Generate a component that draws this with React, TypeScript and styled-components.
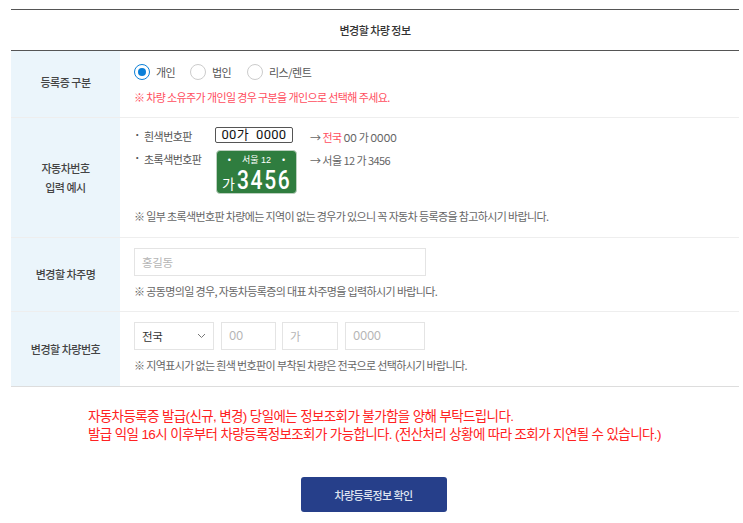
import React from "react";
import styled, { createGlobalStyle } from "styled-components";

const Global = createGlobalStyle`
  html, body { margin: 0; padding: 0; background: #fff; height: 523px; overflow: hidden; }
  body { font-family: "Noto Sans CJK KR", "Noto Sans", sans-serif; color: #555; }
  * { box-sizing: border-box; }
`;
const Page = styled.div`padding: 9px 4px 0 11px; width: 743px;`;
const Table = styled.div`border-top: 1px solid #555; border-bottom: 1px solid #ddd;`;
const Title = styled.div`height: 41px; border-bottom: 1px solid #555; display: flex; align-items: center; justify-content: center; font-size: 11px; font-weight: 500; color: #333; letter-spacing: -0.52px; padding-bottom: 1px;`;
const Row = styled.div<{ $h: number; $last?: boolean }>`display: flex; height: ${p => p.$h}px; border-bottom: ${p => (p.$last ? "0" : "1px solid #eee")};`;
const Label = styled.div<{ $up?: number }>`width: 109px; flex: none; background: #ebf5fb; display: flex; align-items: center; justify-content: center; text-align: center; font-size: 11px; line-height: 19px; font-weight: 500; color: #444; letter-spacing: -0.5px; padding-bottom: ${p => p.$up ?? 0}px;`;
const Cell = styled.div`flex: 1; padding-left: 14px; position: relative; display: flex; flex-direction: column;`;
const Radios = styled.div`display: flex; align-items: center; height: 18px; margin-top: 12px; font-size: 11px; letter-spacing: -0.5px; color: #555;`;
const Radio = styled.span<{ $on?: boolean }>`width: 16px; height: 16px; border-radius: 50%; margin-right: 6px; flex: none; border: 1px solid ${p => (p.$on ? "#0b7fd8" : "#ccc")}; display: flex; align-items: center; justify-content: center; &::after { content: ""; width: 8px; height: 8px; border-radius: 50%; background: ${p => (p.$on ? "#0b7fd8" : "transparent")}; }`;
const RadioText = styled.span<{ $w: number }>`width: ${p => p.$w}px;`;
const Warn = styled.div`margin-top: 8px; font-size: 11px; line-height: 16px; color: #ff4d5e; letter-spacing: -0.62px;`;
const Note = styled.div<{ $top: number }>`margin-top: ${p => p.$top}px; font-size: 11px; line-height: 16px; color: #666; letter-spacing: -0.63px; white-space: nowrap;`;
const PlateGrid = styled.div`display: grid; grid-template-columns: 81px 95px 1fr; grid-template-rows: 23px 44px; margin-top: 9px; font-size: 11px; line-height: 18px; color: #555; letter-spacing: -0.55px;`;
const PlateName = styled.div`display: flex; gap: 7px; height: 18px; &::before { content: "·"; font-weight: 700; width: 3px; margin-top: -2px; }`;
const PlateWhite = styled.div`width: 78px; height: 16px; border: 1px solid #555; border-radius: 2px; display: flex; align-items: center; justify-content: center; font-family: "Roboto", "Noto Sans CJK KR", sans-serif; font-size: 13px; font-weight: 400; color: #111; letter-spacing: 0.3px; white-space: pre;`;
const PlateGreen = styled.div`width: 81px; height: 44px; margin-left: 1px; background: #2f7d3f; border: 1px solid #bcd0bf; border-radius: 4px; color: #fff; display: flex; flex-direction: column; align-items: center;`;
const PlateTop = styled.div`display: flex; gap: 11px; font-family: "Liberation Sans", "Noto Sans CJK KR", sans-serif; font-size: 9px; line-height: 12px; margin-top: 3px; letter-spacing: 0;`;
const PlateMain = styled.div`display: flex; align-items: baseline; gap: 2px; width: 100%; margin-top: 2px; padding-left: 5px; font-family: "Roboto", sans-serif; font-size: 25px; line-height: 26px; font-weight: 500; letter-spacing: 2px;`;
const PlateHan = styled.span`font-family: "Noto Sans CJK KR", sans-serif; font-size: 14px; font-weight: 400; letter-spacing: 0;`;
const PlateNumber = styled.span`display: inline-block; width: 54px; transform: scaleX(0.84); transform-origin: left center;`;
const Example = styled.div`color: #666; margin-top: 1px;`;
const Digits = styled.span`font-family: "Inter", "Noto Sans CJK KR", sans-serif; letter-spacing: -0.3px;`;
const Red = styled.span`color: #ff4d5e;`;
const Field = styled.div<{ $w: number; $dark?: boolean; $ml?: number; $digits?: boolean }>`width: ${p => p.$w}px; height: 28px; margin-left: ${p => p.$ml ?? 0}px; border: 1px solid #e4e4e4; display: flex; align-items: center; justify-content: space-between; padding: 0 7px; font-family: ${p => (p.$digits ? '"Inter", "Noto Sans CJK KR", sans-serif' : "inherit")}; font-size: 11.5px; color: ${p => (p.$dark ? "#333" : "#b5b5b5")}; letter-spacing: -0.3px; flex: none;`;
const Fields = styled.div`display: flex; margin-top: 10px;`;
const Notice = styled.div`margin: 21px 0 0 77px; font-family: "Liberation Sans", "Noto Sans CJK KR", sans-serif; font-size: 13.5px; line-height: 18px; color: #ff2222; letter-spacing: -0.62px; white-space: nowrap;`;
const Actions = styled.div`display: flex; justify-content: center; margin-top: 33px; padding-right: 3px;`;
const Button = styled.button`width: 146px; height: 35px; border: 0; border-radius: 3px; background: #263f8a; color: #dfe4f0; font-family: "Noto Sans CJK KR", sans-serif; font-size: 11px; font-weight: 500; letter-spacing: -0.58px;`;

export default function App() {
  return (
    <Page>
      <Global />
      <Table>
        <Title>변경할 차량 정보</Title>
        <Row $h={67}>
          <Label $up={3}>등록증 구분</Label>
          <Cell>
            <Radios>
              <Radio $on /><RadioText $w={34}>개인</RadioText>
              <Radio /><RadioText $w={35}>법인</RadioText>
              <Radio /><RadioText $w={60}>리스/렌트</RadioText>
            </Radios>
            <Warn>※ 차량 소유주가 개인일 경우 구분을 개인으로 선택해 주세요.</Warn>
          </Cell>
        </Row>
        <Row $h={120}>
          <Label>자동차번호<br />입력 예시</Label>
          <Cell>
            <PlateGrid>
              <PlateName>흰색번호판</PlateName>
              <div><PlateWhite>00가  0000</PlateWhite></div>
              <Example>→ <Red>전국</Red> <Digits>00</Digits> 가 <Digits>0000</Digits></Example>
              <PlateName>초록색번호판</PlateName>
              <PlateGreen>
                <PlateTop><span>•</span><span>서울 12</span><span>•</span></PlateTop>
                <PlateMain><PlateHan>가</PlateHan><PlateNumber>3456</PlateNumber></PlateMain>
              </PlateGreen>
              <Example>→ 서울 12 가 3456</Example>
            </PlateGrid>
            <Note $top={14}>※ 일부 초록색번호판 차량에는 지역이 없는 경우가 있으니 꼭 자동차 등록증을 참고하시기 바랍니다.</Note>
          </Cell>
        </Row>
        <Row $h={74}>
          <Label $up={1}>변경할 차주명</Label>
          <Cell>
            <Fields><Field $w={292}>홍길동</Field></Fields>
            <Note $top={7}>※ 공동명의일 경우, 자동차등록증의 대표 차주명을 입력하시기 바랍니다.</Note>
          </Cell>
        </Row>
        <Row $h={74} $last>
          <Label>변경할 차량번호</Label>
          <Cell>
            <Fields>
              <Field $w={80} $dark>
                전국
                <svg width="9" height="6" viewBox="0 0 9 6" fill="none"><path d="M1 1l3.5 3.5L8 1" stroke="#777" strokeWidth="1" /></svg>
              </Field>
              <Field $w={55} $ml={7} $digits>00</Field>
              <Field $w={56} $ml={6}>가</Field>
              <Field $w={80} $ml={7} $digits>0000</Field>
            </Fields>
            <Note $top={7}>※ 지역표시가 없는 흰색 번호판이 부착된 차량은 전국으로 선택하시기 바랍니다.</Note>
          </Cell>
        </Row>
      </Table>
      <Notice>
        <div>자동차등록증 발급(신규, 변경) 당일에는 정보조회가 불가함을 양해 부탁드립니다.</div>
        <div>발급 익일 16시 이후부터 차량등록정보조회가 가능합니다. (전산처리 상황에 따라 조회가 지연될 수 있습니다.)</div>
      </Notice>
      <Actions><Button>차량등록정보 확인</Button></Actions>
    </Page>
  );
}
